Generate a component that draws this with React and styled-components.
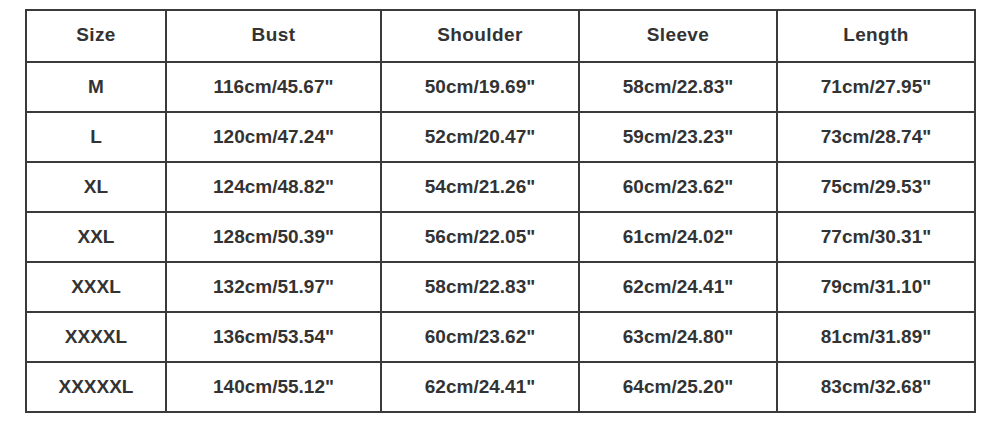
import styled, { createGlobalStyle } from 'styled-components';

const GlobalStyle = createGlobalStyle`
  body {
    margin: 0;
    background: #fff;
    font-family: "Liberation Sans", Arial, sans-serif;
  }
`;

const Page = styled.div`
  padding: 9px 0 0 25px;
`;

const Table = styled.table`
  border-collapse: collapse;
  width: 949px;
  table-layout: fixed;
`;

const Cell = styled.td`
  border: 2px solid #3a3a3a;
  height: 48px;
  padding: 0;
  text-align: center;
  vertical-align: middle;
  font-size: 19px;
  font-weight: bold;
  color: #333;
`;

const Head = styled(Cell).attrs({ as: 'th' })`
  padding-bottom: 2px;
  letter-spacing: 0.4px;
`;

const widths = [140, 215, 198, 198, 198];
const headers = ['Size', 'Bust', 'Shoulder', 'Sleeve', 'Length'];

const rows = [
  ['M', '116cm/45.67"', '50cm/19.69"', '58cm/22.83"', '71cm/27.95"'],
  ['L', '120cm/47.24"', '52cm/20.47"', '59cm/23.23"', '73cm/28.74"'],
  ['XL', '124cm/48.82"', '54cm/21.26"', '60cm/23.62"', '75cm/29.53"'],
  ['XXL', '128cm/50.39"', '56cm/22.05"', '61cm/24.02"', '77cm/30.31"'],
  ['XXXL', '132cm/51.97"', '58cm/22.83"', '62cm/24.41"', '79cm/31.10"'],
  ['XXXXL', '136cm/53.54"', '60cm/23.62"', '63cm/24.80"', '81cm/31.89"'],
  ['XXXXXL', '140cm/55.12"', '62cm/24.41"', '64cm/25.20"', '83cm/32.68"'],
];

export default function App() {
  return (
    <>
      <GlobalStyle />
      <Page>
        <Table>
          <colgroup>
            {widths.map((w, i) => <col key={i} style={{ width: w }} />)}
          </colgroup>
          <thead>
            <tr>
              {headers.map((h) => <Head key={h}>{h}</Head>)}
            </tr>
          </thead>
          <tbody>
            {rows.map((r) => (
              <tr key={r[0]}>
                {r.map((v, i) => <Cell key={i}>{v}</Cell>)}
              </tr>
            ))}
          </tbody>
        </Table>
      </Page>
    </>
  );
}
